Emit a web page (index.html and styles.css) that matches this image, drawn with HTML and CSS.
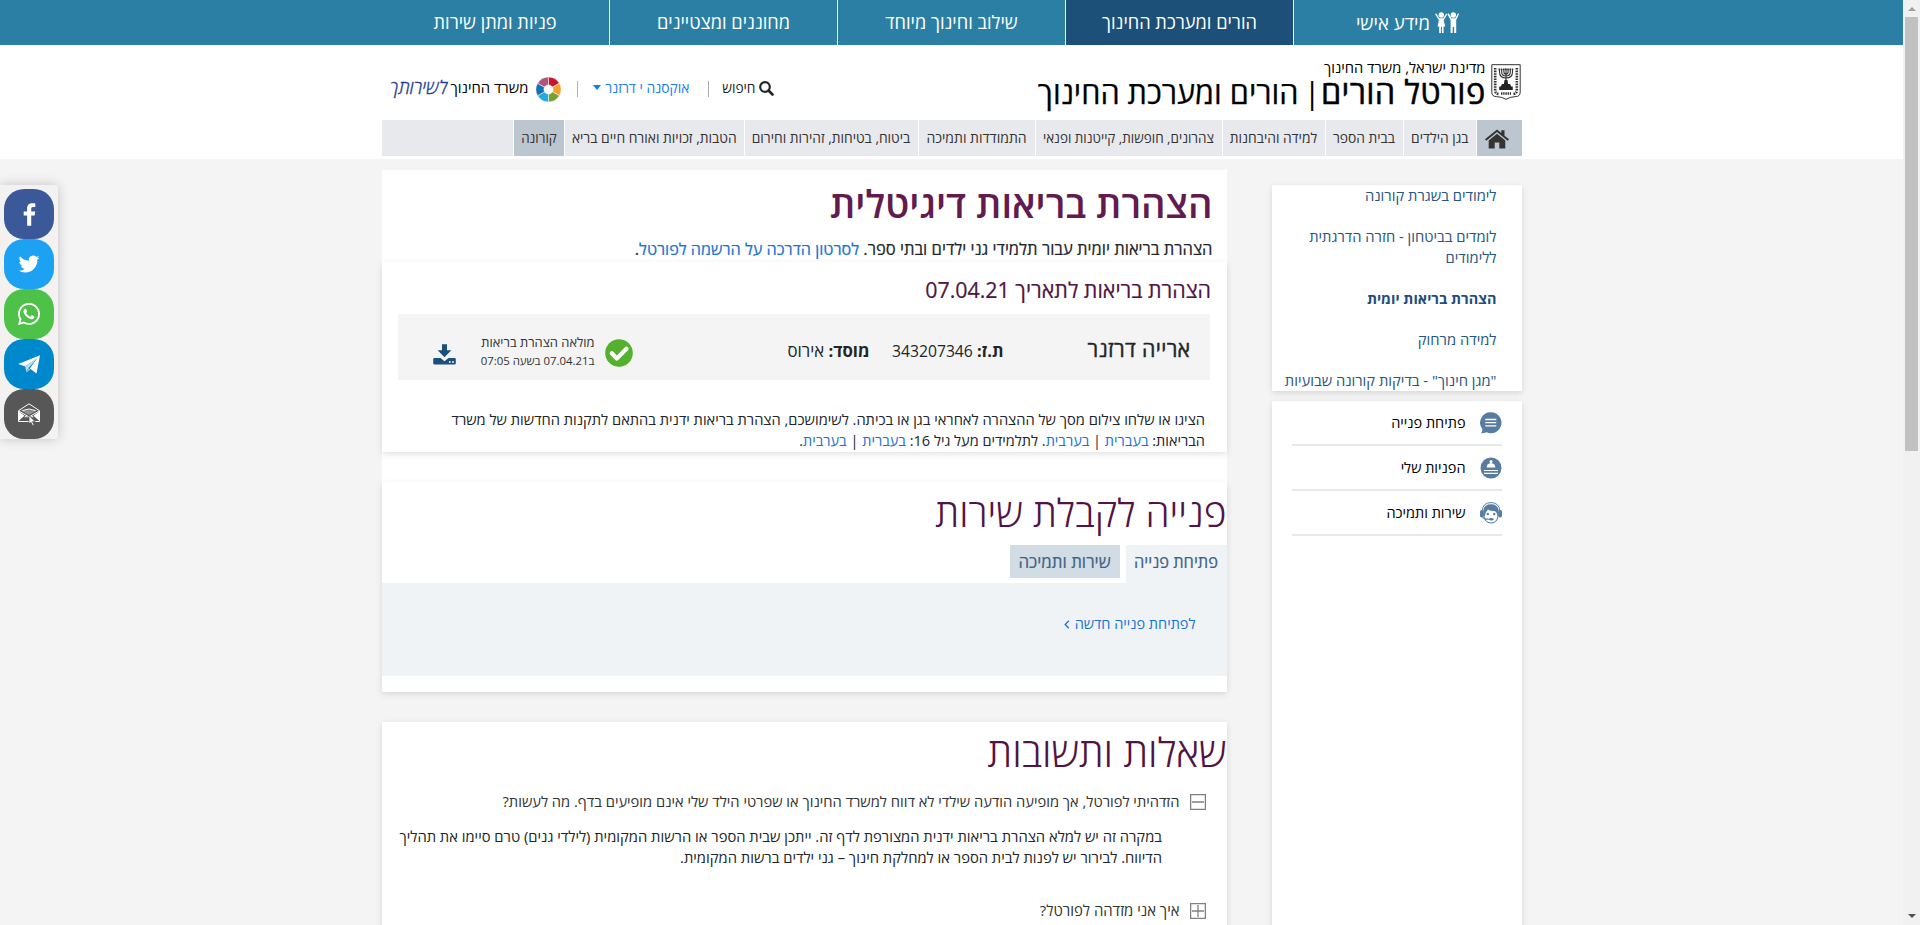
FILE: index.html
```html
<!DOCTYPE html>
<html lang="he" dir="rtl">
<head>
<meta charset="utf-8">
<title>הצהרת בריאות דיגיטלית</title>
<link rel="stylesheet" href="styles.css">
</head>
<body>
<div class="page">
  <nav class="topnav">
    <div class="wrap topnav-row">
      <a class="top-item"><svg class="kids" viewBox="0 0 24 22"><g fill="#fff"><circle cx="6.3" cy="3" r="2.7"/><circle cx="18.3" cy="3" r="2.7"/><path d="M0 2l1.3-.6 3 4.8h4l3-4.8 1 .8-3.6 6 1.5 6.3H8.6V21H6.9v-6h-1v6H4.2v-6.500H2.500L3.900 8.200z"/><path d="M12.400 2l1.200-.8 2.900 5h3.800l2.700-5L24 2l-2.800 6v13h-2.100v-6h-1.400v6h-2.100V8z"/></g></svg><span class="t-personal">מידע אישי</span></a>
      <a class="top-item active">הורים ומערכת החינוך</a>
      <a class="top-item">שילוב וחינוך מיוחד</a>
      <a class="top-item">מחוננים ומצטיינים</a>
      <a class="top-item">פניות ומתן שירות</a>
    </div>
  </nav>

  <header class="header">
    <div class="wrap header-row">
      <svg class="emblem" viewBox="0 0 30 36" fill="none" stroke="#333" stroke-width="1"><path d="M.8.7h28.400v27.500q0 4.300-4.500 4.400-6 .2-9.700 2.700-3.700-2.500-9.700-2.700Q.8 32.500.8 28.200z"/><path d="M4.200 4v22q0 3.500 3.500 4M25.800 4v22q0 3.500-3.500 4" stroke-width="2.600" stroke-dasharray="1.600 1"/><path d="M8.500 5v3q0 6 6.500 6t6.500-6V5M10.700 5v3q0 4 4.300 4t4.300-4V5M12.900 5v3q0 2 2.100 2t2.100-2V5M15 4.500V20" stroke-width="1.100"/><path d="M7.500 5.300h15" stroke-width="1.700" stroke-dasharray="1.500 .7"/><path d="M13.500 16h3l.6 4h2l1 2.500h1.700V26H8.200v-3.500h1.700l1-2.500h2z" fill="#222" stroke="none"/><path d="M10 29.500h10" stroke-width="2.400" stroke-dasharray="1.400 .8"/></svg>
      <div class="brand">
        <div class="brand-sub">מדינת ישראל, משרד החינוך</div>
        <div class="brand-title"><span class="portal">פורטל הורים</span><span class="bar">|</span><span class="section">הורים ומערכת החינוך</span></div>
      </div>
      <div class="tools">
        <svg class="search" viewBox="0 0 15 15" fill="none" stroke="#212529"><circle cx="6" cy="6" r="4.800" stroke-width="2.200"/><path d="M9.500 9.500l4 4" stroke-width="2.600" stroke-linecap="round"/></svg>
        <span class="t-search">חיפוש</span>
        <i class="divider d1"></i>
        <a class="t-user">אוקסנה י דרזנר</a>
        <i class="caret"></i>
        <i class="divider d2"></i>
        <svg class="wheel" viewBox="-12.500 -12.500 25 25" stroke="#fff" stroke-width=".5"><path fill="#c8152b" d="M0 0V-12.500A12.500 12.500 0 0 1 10.830-6.250z"/><path fill="#f5a12d" d="M0 0L10.830-6.250A12.500 12.500 0 0 1 10.830 6.250z"/><path fill="#78a22f" d="M0 0L10.830 6.250A12.500 12.500 0 0 1 0 12.500z"/><path fill="#27a9dc" d="M0 0V12.500A12.500 12.500 0 0 1-10.830 6.250z"/><path fill="#1272b6" d="M0 0L-10.830 6.250A12.500 12.500 0 0 1-10.830-6.250z"/><path fill="#b25378" d="M0 0L-10.830-6.250A12.500 12.500 0 0 1 0-12.500z"/><circle r="4.600" fill="#fff"/></svg>
        <span class="t-ministry">משרד החינוך</span>
        <span class="slogan">לשירותך</span>
      </div>
    </div>
    <div class="wrap menu">
      <a class="m-home"><svg viewBox="0 0 24 20" width="24" height="20" fill="#333"><path d="M0 10.300L12 .5l4.300 3.500V1.200h3.200v5.500l4.500 3.600-1.300 1.500L12 3 1.300 11.800z"/><path d="M3.700 11.500L12 4.700l8.300 6.800V19.500h-6v-6H9.700v6h-6z"/></svg></a>
      <a class="m1">בגן הילדים</a>
      <a class="m2">בבית הספר</a>
      <a class="m3">למידה והיבחנות</a>
      <a class="m4">צהרונים, חופשות, קייטנות ופנאי</a>
      <a class="m5">התמודדות ותמיכה</a>
      <a class="m6">ביטוח, בטיחות, זהירות וחירום</a>
      <a class="m7">הטבות, זכויות ואורח חיים בריא</a>
      <a class="m8">קורונה</a>
      <span class="m-rest"></span>
    </div>
  </header>

  <div class="wrap body-row">
    <aside class="side">
      <ul class="card side-menu">
        <li>לימודים בשגרת קורונה</li>
        <li>לומדים בביטחון - חזרה הדרגתית<br>ללימודים</li>
        <li class="current">הצהרת בריאות יומית</li>
        <li>למידה מרחוק</li>
        <li>"מגן חינוך" - בדיקות קורונה שבועיות</li>
      </ul>
      <div class="card side-actions">
        <a><svg viewBox="0 0 22 22"><path fill="#567da1" d="M11 .3A10.500 10.500 0 1 1 6.500 20.300Q4 21.500.8 21.300 2.600 20 2.400 17.300A10.500 10.500 0 0 1 11 .3z"/><path stroke="#fff" stroke-width="1.300" d="M5.300 7.500h11M5.300 10.700h11M5.300 13.800h11"/></svg>פתיחת פנייה</a>
        <a><svg viewBox="0 0 22 22"><circle cx="11" cy="11" r="10.500" fill="#567da1"/><circle cx="11" cy="4.400" r="1.500" fill="#fff"/><path fill="#fff" d="M10.300 5h1.400v1.300q3.600.6 3.600 4.200H6.700q0-3.600 3.600-4.200z"/><path stroke="#fff" stroke-width="1.200" d="M4 13.500h14M4 16.300h14"/></svg>הפניות שלי</a>
        <a><svg viewBox="0 0 22 22"><path fill="none" stroke="#567da1" stroke-width="1" d="M2 9Q3 .6 11 .6T20 9"/><path fill="#567da1" d="M3.200 9Q4 2.300 11 2.300T18.800 9v5h-1.300Q17 10 14.500 9q-4 .3-6.500-1.500Q5.500 9.500 4.800 14H3.200z"/><rect x="0" y="8" width="3.600" height="7.500" rx="1.700" fill="#567da1"/><rect x="18.400" y="8" width="3.600" height="7.500" rx="1.700" fill="#567da1"/><path fill="none" stroke="#567da1" stroke-width="1.100" d="M3.800 13.500Q4.800 21 11 21t7.200-7.500M2.500 15.500q3 2 6.500 1.800"/><circle cx="7.800" cy="12" r="1.200" fill="#567da1"/><circle cx="14.200" cy="12" r="1.200" fill="#567da1"/><ellipse cx="11.300" cy="17.300" rx="2.500" ry="1.200" fill="#567da1"/></svg>שירות ותמיכה</a>
      </div>
    </aside>

    <main class="main">
      <section class="intro">
        <h1>הצהרת בריאות דיגיטלית</h1>
        <p class="lead"><span class="lead-a">הצהרת בריאות יומית עבור תלמידי גני ילדים ובתי ספר. </span><a class="lead-b">לסרטון הדרכה על הרשמה לפורטל</a>.</p>
        <div class="card declaration">
          <h2>הצהרת בריאות לתאריך 07.04.21</h2>
          <div class="child">
            <span class="name">ארייה דרזנר</span>
            <span class="idno"><b>ת.ז:</b> <span>343207346</span></span>
            <span class="school"><b>מוסד:</b> אירוס</span>
            <svg class="check" viewBox="0 0 28 28"><circle cx="14" cy="14" r="13.800" fill="#53b12e"/><path d="M6.800 14.300l5 5.200 9.700-9.700" fill="none" stroke="#fff" stroke-width="4.200" stroke-linecap="round" stroke-linejoin="round"/></svg>
            <span class="status"><span class="s1">מולאה הצהרת בריאות</span><span class="s2">ב07.04.21 בשעה 07:05</span></span>
            <svg class="download" viewBox="0 0 23 21" fill="#1c4f7c"><path d="M9 .3h5v5.900h4.300L11.500 13.300 4.700 6.200H9z"/><path d="M1.500 14h6l4 3.200 4-3.200h6q1.300 0 1.300 1.300v4q0 1.300-1.300 1.300h-20Q.2 20.600.2 19.300v-4Q.2 14 1.500 14z"/><circle cx="16.800" cy="18" r=".9" fill="#fff"/><circle cx="20" cy="18" r=".9" fill="#fff"/></svg>
          </div>
          <p class="note">הציגו או שלחו צילום מסך של ההצהרה לאחראי בגן או בכיתה. לשימושכם, הצהרת בריאות ידנית בהתאם לתקנות החדשות של משרד<br><span class="note-2">הבריאות: <a>בעברית</a> | <a>בערבית</a>. לתלמידים מעל גיל 16: <a>בעברית</a> | <a>בערבית</a>.</span></p>
        </div>
      </section>

      <section class="card service">
        <h3>פנייה לקבלת שירות</h3>
        <div class="tabs"><a class="tab on">פתיחת פנייה</a><a class="tab off">שירות ותמיכה</a></div>
        <div class="pane"><a>לפתיחת פנייה חדשה<svg viewBox="0 0 6 9" width="6" height="9"><path d="M4.800.7L1.200 4.500l3.600 3.800" fill="none" stroke="#1a73d6" stroke-width="1.300"/></svg></a></div>
      </section>

      <section class="card faq">
        <h3>שאלות ותשובות</h3>
        <div class="q"><svg viewBox="0 0 16 16"><path d="M.6.600h14.800v14.800H.6zM2 8h12" fill="none" stroke="#808080" stroke-width="1.300"/></svg><span>הזדהיתי לפורטל, אך מופיעה הודעה שילדי לא דווח למשרד החינוך או שפרטי הילד שלי אינם מופיעים בדף. מה לעשות?</span></div>
        <p class="a">במקרה זה יש למלא הצהרת בריאות ידנית המצורפת לדף זה. ייתכן שבית הספר או הרשות המקומית (לילדי גנים) טרם סיימו את תהליך<br>הדיווח. לבירור יש לפנות לבית הספר או למחלקת חינוך – גני ילדים ברשות המקומית.</p>
        <div class="q"><svg viewBox="0 0 16 16"><path d="M.6.600h14.800v14.800H.6zM2 8h12M8 2v12" fill="none" stroke="#808080" stroke-width="1.300"/></svg><span class="q2">איך אני מזדהה לפורטל?</span></div>
      </section>
    </main>
  </div>
</div>

<div class="share">
  <a class="fb"><svg viewBox="0 0 32 32" width="31" height="31"><path fill="#fff" d="M17.780 27.500V17.008h3.522l.527-4.090h-4.050v-2.610c0-1.182.330-1.990 2.023-1.990h2.166V4.660c-.375-.050-1.660-.160-3.155-.160-3.123 0-5.260 1.905-5.260 5.405v3.016h-3.530v4.090h3.530V27.500h4.223z"/></svg></a>
  <a class="tw"><svg viewBox="0 0 32 32" width="28" height="28"><path fill="#fff" d="M28 8.557a9.913 9.913 0 0 1-2.828.775 4.930 4.930 0 0 0 2.166-2.725 9.738 9.738 0 0 1-3.130 1.194 4.920 4.920 0 0 0-3.593-1.550 4.924 4.924 0 0 0-4.794 6.049c-4.090-.210-7.720-2.170-10.150-5.150a4.942 4.942 0 0 0-.665 2.477c0 1.710.870 3.214 2.190 4.100a4.968 4.968 0 0 1-2.230-.616v.060c0 2.390 1.700 4.380 3.952 4.830-.414.115-.850.174-1.297.174-.318 0-.626-.030-.928-.086a4.935 4.935 0 0 0 4.600 3.420 9.893 9.893 0 0 1-6.114 2.107c-.398 0-.790-.023-1.175-.068a13.953 13.953 0 0 0 7.550 2.213c9.056 0 14.010-7.507 14.010-14.013 0-.213-.005-.426-.015-.637.960-.695 1.795-1.560 2.455-2.550z"/></svg></a>
  <a class="wa"><svg viewBox="0 32 448 448" width="22" height="22"><path fill="#fff" d="M380.900 97.100C339 55.100 283.200 32 223.900 32c-122.400 0-222 99.600-222 222 0 39.100 10.200 77.300 29.600 111L0 480l117.700-30.900c32.400 17.700 68.900 27 106.100 27h.1c122.300 0 224.100-99.600 224.100-222 0-59.300-25.200-115-67.100-157zm-157 341.600c-33.200 0-65.700-8.900-94-25.700l-6.700-4-69.800 18.300L72 359.200l-4.400-7c-18.500-29.400-28.200-63.300-28.200-98.200 0-101.700 82.800-184.500 184.600-184.500 49.300 0 95.600 19.200 130.400 54.100 34.800 34.900 56.200 81.200 56.100 130.500 0 101.800-84.900 184.600-186.600 184.600zm101.200-138.200c-5.500-2.800-32.800-16.200-37.900-18-5.100-1.900-8.800-2.800-12.500 2.800-3.700 5.600-14.300 18-17.600 21.800-3.200 3.700-6.500 4.200-12 1.400-32.600-16.300-54-29.100-75.500-66-5.700-9.800 5.700-9.100 16.300-30.300 1.800-3.700.9-6.900-.5-9.700-1.400-2.800-12.500-30.100-17.100-41.200-4.500-10.800-9.100-9.300-12.500-9.500-3.200-.2-6.900-.2-10.600-.2-3.700 0-9.700 1.400-14.800 6.900-5.100 5.600-19.400 19-19.400 46.300 0 27.300 19.900 53.700 22.600 57.400 2.800 3.700 39.100 59.700 94.800 83.800 35.200 15.200 49 16.500 66.600 13.900 10.700-1.600 32.800-13.400 37.400-26.400 4.600-13 4.600-24.100 3.200-26.400-1.300-2.500-5-3.900-10.500-6.600z"/></svg></a>
  <a class="tg"><svg viewBox="0 0 22 19" width="22" height="19"><path fill="#fff" d="M22 .3L18.500 18.500l-6.700-5L19 3.500 7 11.300.2 9z"/><path fill="#bcdff2" d="M19 3.500L7 11.300l1.700 6.200 1.300-4 9-10z"/><path fill="#8fc7e6" d="M10 13l2.300 1.300-3.600 3.200z"/></svg></a>
  <a class="em"><svg viewBox="0 0 22 23" width="22" height="23"><path fill="none" stroke="#fff" d="M.8 7.500L11 .8l10.200 6.700M4.500 7.500q6.500-3 13 0"/><path fill="#fff" d="M0 7.800l6.500 4.900L0 18.500zM22 7.800l-6.500 4.900L22 18.500z"/><path fill="#fff" d="M2.500 7.200h17L11 12z" opacity=".35"/><path fill="#fff" d="M7.500 12.800l3.500 1.700 3.500-1.700 1.500 1.500H6z" opacity=".85"/><path stroke="#fff" fill="none" d="M.5 7.500v11h21v-11M1 8l10 6 10-6"/><path fill="#fff" stroke="#555" stroke-width=".8" d="M11 12.500l6 6-2.600.1 1.800 3.500-1.600.7-1.600-3.500-2 1.700z"/></svg></a>
</div>

<div class="scroll"><i class="up"></i><i class="thumb"></i><i class="down"></i></div>
</body>
</html>
```

FILE: styles.css
```css
* { box-sizing: border-box; }
html, body { height: 100%; margin: 0; overflow: hidden; }
body { font-family: "Open Sans", "DejaVu Sans", sans-serif; font-size: 14.7px; color: #212529; background: #f4f4f4; white-space: nowrap; }
h1, h2, h3, p, ul { margin: 0; padding: 0; }
a { color: #1a73d6; }
svg { display: block; flex: none; }
.page { margin-right: 17px; height: 925px; overflow: hidden; }
.wrap { width: 1140px; margin: 0 auto; display: flex; }

.topnav { background: #2c7fa4; height: 45px; }
.topnav-row { margin: 0 382px 0 auto; }
.top-item { width: 228px; height: 45px; line-height: 45px; display: flex; justify-content: center; color: #fff; font-size: 18.2px; border-left: 1px solid #fff; }
.top-item:last-child { border-left: 0; }
.top-item.active { background: #1c5079; }
.kids { width: 24px; height: 22px; margin: 12px 0 0 5px; }
.t-personal { font-size: 18.6px; }

.header { background: #fff; height: 114px; }
.header-row { height: 75px; align-items: flex-start; }
.emblem { width: 30px; height: 36px; margin: 19px 1px 0 5px; }
.brand { color: #000; margin-top: 13px; }
.brand-sub { font-size: 14.7px; line-height: 18px; }
.brand-title { display: flex; line-height: 34px; margin-top: -1px; }
.portal { font-size: 32.5px; letter-spacing: .3px; -webkit-text-stroke: .5px #000; width: 165px; }
.bar { font-size: 30.6px; width: 22px; }
.section { font-size: 30.6px; -webkit-text-stroke: .25px #000; }
.tools { display: flex; align-items: center; height: 20px; line-height: 20px; margin: 33px auto 0 8px; }
.search { width: 15px; height: 15px; margin-left: 4px; }
.t-search { font-size: 13.7px; width: 33px; }
.divider { width: 1px; height: 16px; background: #a9abb0; margin-top: 2px; }
.d1 { margin-right: 13px; margin-left: 19px; }
.t-user { font-size: 13.9px; color: #1a7df0; width: 84px; }
.caret { border: 4.5px solid transparent; border-top: 5px solid #0d7bf5; border-bottom: 0; margin: -2px 4px 0 0; }
.d2 { margin: 2px 15px 0 16px; background: #bdb58f; }
.wheel { width: 25px; height: 25px; margin-top: 2px; }
.t-ministry { font-size: 14.8px; color: #000; margin: -2px 8px 0 3px; }
.slogan { font-size: 18px; font-style: italic; font-weight: 300; color: #1f3f94; width: 58px; margin-top: -2px; text-align: center; -webkit-text-stroke: .3px #1f3f94; }

.menu { height: 36px; gap: 1px; line-height: 36px; font-size: 13.8px; }
.menu > * { background: #e8e9ed; color: #333; text-align: center; flex: none; overflow: hidden; }
.menu .m-home { width: 44.5px; background: #bcc6d0; display: flex; align-items: center; padding: 2px 13px 0 0; }
.m1 { width: 72.5px; }
.m2 { width: 77px; }
.m3 { width: 102px; }
.m4 { width: 186px; font-size: 13.45px; }
.m5 { width: 116px; font-size: 14px; }
.m6 { width: 173px; }
.m7 { width: 178.5px; font-size: 13.85px; }
.menu .m8 { width: 50px; background: #bcc6d0; font-size: 13.4px; }
.menu .m-rest { flex: 1; }

.body-row { justify-content: space-between; align-items: flex-start; }
.card { background: #fff; box-shadow: 0 2px 6px rgba(0, 0, 0, .12); }
.side { width: 250px; margin-top: 26px; }
.side-menu { list-style: none; display: flex; flex-direction: column; gap: 20px; padding-right: 25px; line-height: 21px; font-size: 14.75px; color: #25567f; }
.side-menu .current { font-weight: 700; font-size: 14.4px; color: #1c4f7c; }
.side-actions { margin-top: 10px; height: 560px; padding: 0 20px; }
.side-actions a { display: flex; align-items: center; gap: 14px; height: 45px; line-height: 43px; border-bottom: 2px solid #e6e8ea; color: #000; font-size: 14.5px; }
.side-actions svg { width: 22px; height: 22px; margin-top: 1px; }

.main { width: 845px; margin-top: 11px; }
.intro { background: #fff; height: 312px; padding-top: 9px; }
h1 { font-size: 38.1px; font-weight: 600; line-height: 48px; color: #621b50; padding-right: 14px; }
.lead { font-size: 16.4px; line-height: 22px; margin-top: 11px; padding-right: 14px; -webkit-text-stroke: .2px; }
.lead-a { font-size: 16.55px; }
.lead-b { font-size: 16.2px; }
.declaration { margin-top: 2px; padding-top: 14px; height: 190px; }
h2 { font-size: 21.4px; font-weight: 400; line-height: 28px; color: #521345; padding-right: 15.5px; -webkit-text-stroke: .2px; }
.child { display: flex; align-items: flex-start; height: 66px; margin: 10px 17px 0 16px; padding-right: 19px; background: #f4f4f4; line-height: 20px; }
.name { font-size: 21.3px; letter-spacing: .35px; -webkit-text-stroke: .4px; width: 187px; margin-top: 25px; }
.idno { font-size: 15.7px; width: 134px; margin-top: 27px; }
.idno b { font-size: 16.5px; }
.school { font-size: 16.8px; width: 237px; margin-top: 27px; }
.check { width: 28px; height: 28px; margin-top: 25px; }
.status { display: flex; flex-direction: column; width: 124px; padding-right: 10px; margin-top: 20px; line-height: 17.5px; color: #333; }
.s1 { font-size: 12.9px; }
.s2 { font-size: 11.4px; }
.download { width: 23px; height: 21px; margin: 30px 25px 0 0; }
.note { line-height: 21px; font-size: 14.66px; margin-top: 29px; padding-right: 21.5px; }
.note-2 { font-size: 14.52px; }

h3 { font-size: 38.8px; font-weight: 300; line-height: 50px; color: #521345; padding-right: 0; }
.service { height: 210px; padding-top: 5px; }
.tabs { display: flex; gap: 6px; margin-top: 8px; height: 38px; align-items: flex-start; line-height: 33px; }
.tab { text-align: center; color: #3d6285; -webkit-text-stroke: .2px; }
.tab.on { width: 101px; height: 38px; background: #eff3f6; font-size: 16.4px; }
.tab.off { width: 110px; height: 33px; background: #d2dce4; font-size: 16.9px; }
.pane { height: 93px; background: #eff3f6; padding: 30px 31px 0 0; line-height: 21px; font-size: 14.5px; }
.pane a { display: flex; align-items: center; gap: 5px; }
.pane svg { margin-top: 2px; }
.faq { margin-top: 30px; height: 300px; padding-top: 5px; }
.faq h3 { font-size: 40px; }
.q { display: flex; gap: 10px; line-height: 21px; margin: 14px 21px 0 0; color: #333; font-size: 14.7px; }
.q svg { width: 16px; height: 16px; margin-top: 3px; }
.a { margin: 14px 64.5px 32px 0; line-height: 21px; font-size: 14.75px; }
.q2 { font-size: 14.9px; }

.share { position: fixed; left: 0; top: 185px; width: 58px; height: 254px; padding: 4px 4px 0; background: #f4f2f1; border-radius: 0 3px 3px 0; box-shadow: 0 0 12px rgba(0, 0, 0, .2); }
.share a { width: 50px; height: 50px; border-radius: 20px; display: flex; align-items: center; justify-content: center; }
.fb { background: #3b5998; }
.tw { background: #1da1f2; }
.wa { background: #4ec248; }
.tg { background: #0088cc; }
.em { background: #575757; }

.scroll { position: fixed; right: 0; top: 0; width: 17px; height: 925px; background: #f1f1f1; display: flex; flex-direction: column; align-items: center; }
.up { border: 4px solid transparent; border-bottom-color: #a0a0a0; border-top: 0; margin-top: 7px; }
.thumb { width: 13px; height: 434px; background: #c1c1c1; margin-top: 6px; }
.down { border: 4px solid transparent; border-top-color: #505050; border-bottom: 0; margin: auto 0 7px; }
```
